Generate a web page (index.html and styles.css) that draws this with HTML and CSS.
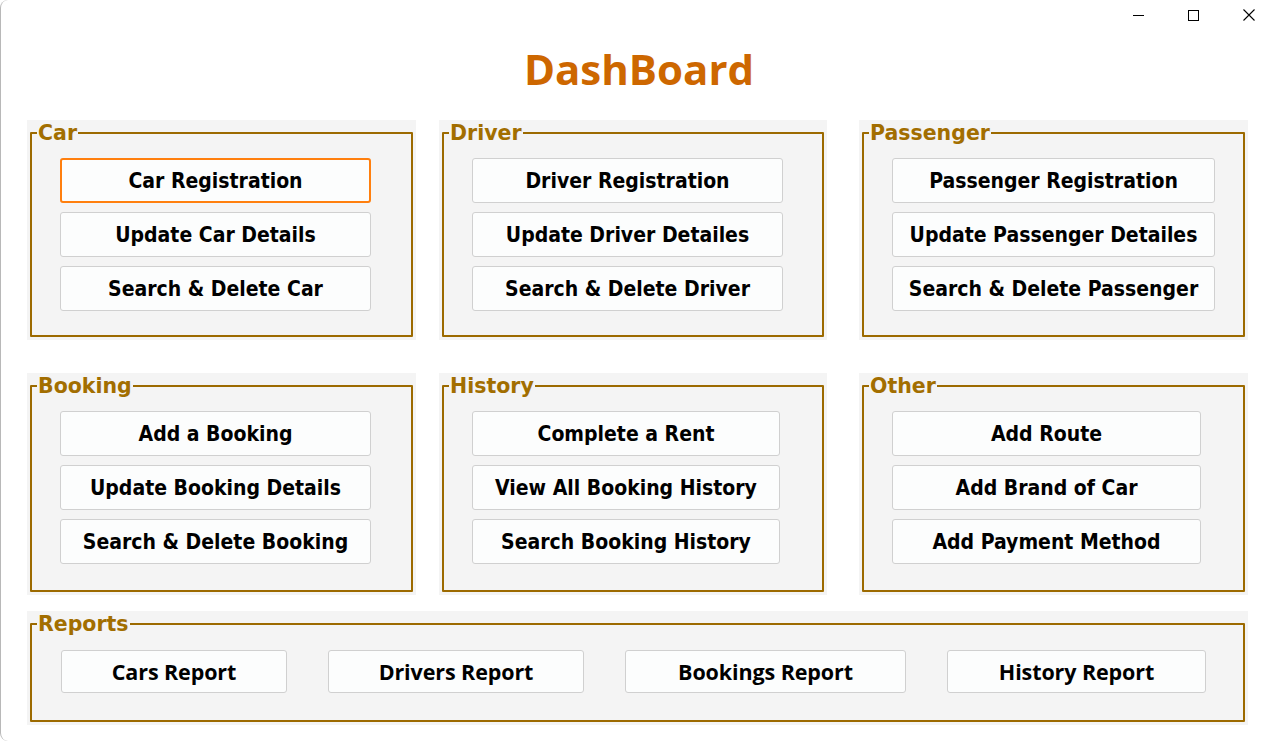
FILE: index.html
```html
<!DOCTYPE html>
<html lang="en">
<head>
<meta charset="utf-8">
<title>DashBoard</title>
<link rel="stylesheet" href="styles.css">
</head>
<body>
<div class="window">
  <div class="titlebar">
    <span class="ctl"><span class="ico-min"></span></span>
    <span class="ctl"><span class="ico-max"></span></span>
    <span class="ctl"><svg class="ico-close" width="12" height="12" viewBox="0 0 12 12"><path d="M0.5 0.5L11.5 11.5M11.5 0.5L0.5 11.5" stroke="#000" stroke-width="1.1" fill="none"/></svg></span>
  </div>
  <h1 class="title">DashBoard</h1>

  <div class="row row-top">
    <div class="panel">
      <fieldset class="group">
        <legend>Car</legend>
        <div class="btns w311">
          <button class="btn focused">Car Registration</button>
          <button class="btn">Update Car Details</button>
          <button class="btn">Search &amp; Delete Car</button>
        </div>
      </fieldset>
    </div>
    <div class="panel mid">
      <fieldset class="group">
        <legend>Driver</legend>
        <div class="btns w311">
          <button class="btn">Driver Registration</button>
          <button class="btn">Update Driver Detailes</button>
          <button class="btn">Search &amp; Delete Driver</button>
        </div>
      </fieldset>
    </div>
    <div class="panel">
      <fieldset class="group">
        <legend>Passenger</legend>
        <div class="btns w323">
          <button class="btn">Passenger Registration</button>
          <button class="btn">Update Passenger Detailes</button>
          <button class="btn">Search &amp; Delete Passenger</button>
        </div>
      </fieldset>
    </div>
  </div>

  <div class="row row-bottom">
    <div class="panel">
      <fieldset class="group">
        <legend>Booking</legend>
        <div class="btns w311">
          <button class="btn">Add a Booking</button>
          <button class="btn">Update Booking Details</button>
          <button class="btn">Search &amp; Delete Booking</button>
        </div>
      </fieldset>
    </div>
    <div class="panel mid">
      <fieldset class="group">
        <legend>History</legend>
        <div class="btns w308">
          <button class="btn">Complete a Rent</button>
          <button class="btn">View All Booking History</button>
          <button class="btn">Search Booking History</button>
        </div>
      </fieldset>
    </div>
    <div class="panel">
      <fieldset class="group">
        <legend>Other</legend>
        <div class="btns w309">
          <button class="btn">Add Route</button>
          <button class="btn">Add Brand of Car</button>
          <button class="btn">Add Payment Method</button>
        </div>
      </fieldset>
    </div>
  </div>

  <div class="panel reports">
    <fieldset class="group">
      <legend>Reports</legend>
      <div class="report-btns">
        <button class="btn rbtn r-cars">Cars Report</button>
        <button class="btn rbtn r-drivers">Drivers Report</button>
        <button class="btn rbtn r-bookings">Bookings Report</button>
        <button class="btn rbtn r-history">History Report</button>
      </div>
    </fieldset>
  </div>
</div>
</body>
</html>
```

FILE: styles.css
```css
html, body {
  margin: 0;
  padding: 0;
  background: #ffffff;
  overflow: hidden;
}

.window {
  box-sizing: border-box;
  width: 1275px;
  height: 741px;
  padding-left: 26px;
  border-left: 1px solid #b8b8b8;
  border-radius: 8px 0 0 8px;
  background: #ffffff;
}

.titlebar {
  height: 30px;
  display: flex;
  justify-content: flex-end;
  margin-right: -1px;
}

.ctl {
  width: 55px;
  height: 30px;
  display: flex;
  align-items: center;
  justify-content: center;
}

.ico-min {
  display: block;
  width: 11px;
  height: 1px;
  background: #000;
}

.ico-max {
  display: block;
  box-sizing: border-box;
  width: 11px;
  height: 11px;
  border: 1px solid #000;
}

.ico-close {
  display: block;
}

.title {
  margin: 9px 0 21px -24px;
  height: 60px;
  line-height: 60px;
  text-align: center;
  font-family: "Open Sans", "Noto Sans", sans-serif;
  font-weight: 700;
  font-size: 42px;
  color: #cd6700;
}

.row {
  display: flex;
}

.row-top .panel {
  height: 220px;
}

.row-bottom {
  margin-top: 33px;
}

.row-bottom .panel {
  height: 222px;
}

.panel {
  box-sizing: border-box;
  width: 389px;
  padding: 1px 3px 3px 3px;
  background: #f4f4f4;
  display: flex;
}

.panel.mid {
  width: 388px;
  margin: 0 32px 0 23px;
}

.group {
  flex: 1;
  min-width: 0;
  margin: 0;
  padding: 13px 0 0 0;
  border: 2px solid #9c6a00;
  border-radius: 1px;
}

.group legend {
  margin-left: 5px;
  padding: 0 1px;
  height: 24px;
  line-height: 24px;
  font-family: "DejaVu Sans", "Verdana", sans-serif;
  font-weight: 700;
  font-size: 20.5px;
  color: #a26e00;
}

.btns {
  display: flex;
  flex-direction: column;
  gap: 9px;
  margin-left: 28px;
}

.w311 { width: 311px; }
.w323 { width: 323px; }
.w308 { width: 308px; }
.w309 { width: 309px; }

.btn {
  box-sizing: border-box;
  height: 45px;
  margin: 0;
  padding: 0;
  background: #fcfdfd;
  border: 1px solid #d0d0d0;
  border-radius: 3px;
  color: #000;
  font-family: "DejaVu Sans Condensed", "DejaVu Sans", sans-serif;
  font-stretch: condensed;
  font-weight: 700;
  font-size: 21px;
  text-align: center;
  white-space: nowrap;
}

.btn.focused {
  border: 2px solid #ff7f0e;
}

.reports {
  width: 1221px;
  height: 114px;
  margin-top: 16px;
}

.reports .group {
  padding-top: 14px;
}

.report-btns {
  display: flex;
  gap: 41px;
  margin-left: 29px;
}

.rbtn {
  height: 43px;
  font-family: "Open Sans", "Noto Sans", sans-serif;
  font-stretch: normal;
  font-size: 21.5px;
  letter-spacing: -0.1px;
}

.r-cars { width: 226px; }
.r-drivers { width: 256px; }
.r-bookings { width: 281px; }
.r-history { width: 259px; }
```
